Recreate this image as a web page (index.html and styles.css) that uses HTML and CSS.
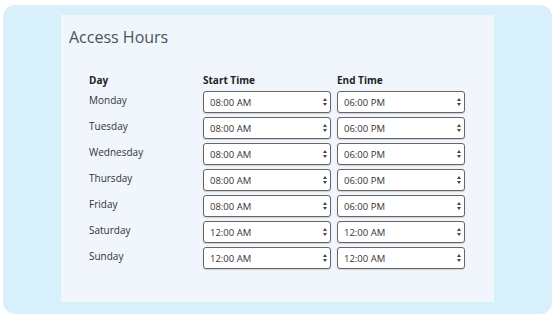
FILE: index.html
```html
<!DOCTYPE html>
<html lang="en">
<head>
    <meta charset="UTF-8">
    <meta name="viewport" content="width=device-width, initial-scale=1.0">
    <title>Access Hours</title>
    <link rel="stylesheet" href="styles.css">
</head>
<body>
    <div class="card">
        <div class="panel">
            <h2 class="title">Access Hours</h2>

            <!-- schedule table -->
            <div class="hours">
                <div class="head">Day</div>
                <div class="head">Start Time</div>
                <div class="head">End Time</div>

                <div class="day">Monday</div>
                <div class="pick"><select><option>08:00 AM</option></select></div>
                <div class="pick"><select><option>06:00 PM</option></select></div>

                <div class="day">Tuesday</div>
                <div class="pick"><select><option>08:00 AM</option></select></div>
                <div class="pick"><select><option>06:00 PM</option></select></div>

                <div class="day">Wednesday</div>
                <div class="pick"><select><option>08:00 AM</option></select></div>
                <div class="pick"><select><option>06:00 PM</option></select></div>

                <div class="day">Thursday</div>
                <div class="pick"><select><option>08:00 AM</option></select></div>
                <div class="pick"><select><option>06:00 PM</option></select></div>

                <div class="day">Friday</div>
                <div class="pick"><select><option>08:00 AM</option></select></div>
                <div class="pick"><select><option>06:00 PM</option></select></div>

                <div class="day">Saturday</div>
                <div class="pick"><select><option>12:00 AM</option></select></div>
                <div class="pick"><select><option>12:00 AM</option></select></div>

                <div class="day">Sunday</div>
                <div class="pick"><select><option>12:00 AM</option></select></div>
                <div class="pick"><select><option>12:00 AM</option></select></div>
            </div>
        </div>
    </div>
</body>
</html>
```

FILE: styles.css
```css
html, body {
    margin: 0;
    height: 100%;
    overflow: hidden;
}
body {
    font-family: "Open Sans", "Liberation Sans", sans-serif;
    background: #fff;
    color: #333;
    padding: 5px 3px 3px;
    box-sizing: border-box;
}
.card {
    height: 309px;
    background: #d8f0fb;
    border-radius: 12px;
    padding: 10px 58px 12px;
    box-sizing: border-box;
    display: flex;
}
.panel {
    flex: 1;
    background: #f0f6fb;
    padding: 12px 8px;
}
.title {
    margin: 0;
    font-size: 16px;
    line-height: 20px;
    font-weight: 400;
    color: #4a535b;
}
.hours {
    margin: 26px 0 0 20px;
    display: grid;
    grid-template-columns: 108px 128px 128px;
    column-gap: 6px;
    row-gap: 4px;
    grid-auto-rows: 22px;
    grid-template-rows: 14px;
    font-size: 10px;
}
.head {
    font-weight: 700;
    line-height: 14px;
    color: #222;
}
.day {
    line-height: 18px;
    color: #333;
}
.pick {
    position: relative;
}
.pick select {
    appearance: none;
    -webkit-appearance: none;
    width: 100%;
    height: 22px;
    margin: 0;
    padding: 0 0 0 6px;
    font-family: inherit;
    font-size: 9.5px;
    color: #333;
    background: #fff;
    border: 1px solid #666;
    border-radius: 3px;
    box-shadow: 0 1px 1px rgba(0, 0, 0, 0.15);
    box-sizing: border-box;
    outline: none;
}
/* up / down arrows */
.pick::before,
.pick::after {
    content: "";
    position: absolute;
    right: 4px;
    border-left: 2.5px solid transparent;
    border-right: 2.5px solid transparent;
    pointer-events: none;
}
.pick::before {
    top: 7px;
    border-bottom: 3px solid #444;
}
.pick::after {
    top: 12px;
    border-top: 3px solid #444;
}
```
